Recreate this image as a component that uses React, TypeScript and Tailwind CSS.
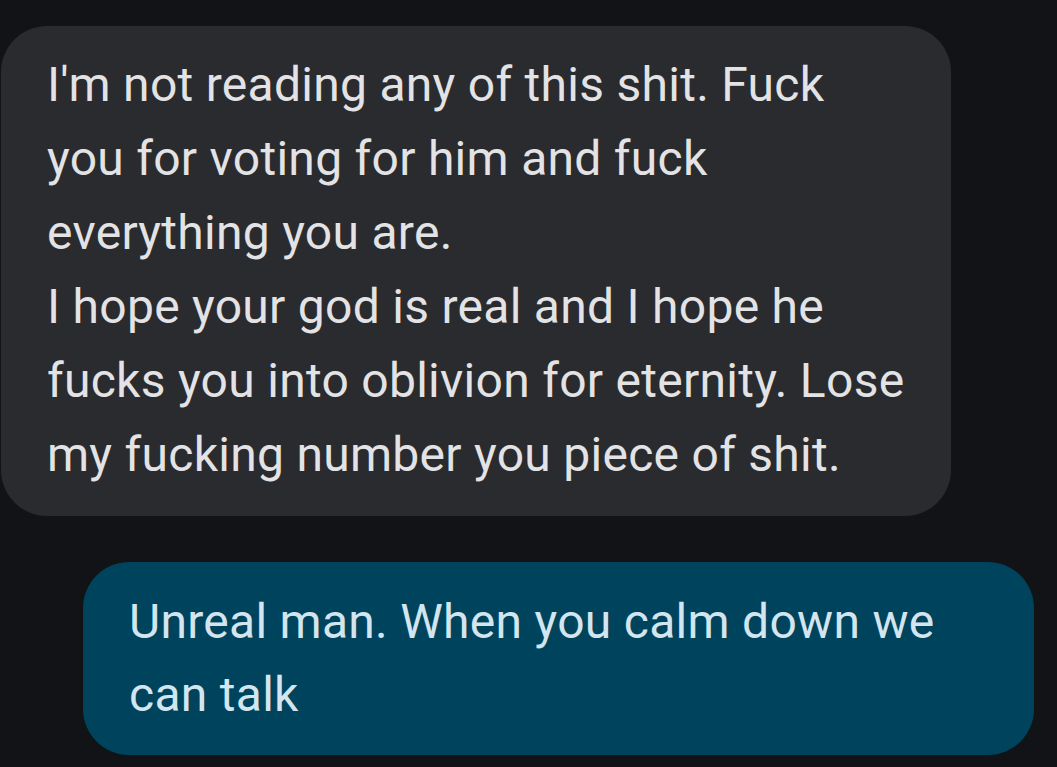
import React from 'react';

const incoming = [
  "I'm not reading any of this shit. Fuck",
  'you for voting for him and fuck',
  'everything you are.',
  'I hope your god is real and I hope he',
  'fucks you into oblivion for eternity. Lose',
  'my fucking number you piece of shit.',
];

const outgoing = ['Unreal man. When you calm down we', 'can talk'];

export default function App() {
  return (
    <div
      className="min-h-screen w-full bg-[#111316] overflow-hidden"
      style={{ fontFamily: 'Roboto, "Noto Sans", sans-serif' }}
    >
      <div className="flex flex-col pt-[26px]">
        {/* received bubble */}
        <div className="ml-[1px] w-[950px] rounded-[46px] bg-[#2a2b2e] pl-[46px] pt-[22px] pb-[24px] text-[48px] leading-[74px] tracking-[0.28px] text-[#e3e3e6] whitespace-nowrap">
          {incoming.map((line, i) => (
            <div key={i}>{line}</div>
          ))}
        </div>

        {/* sent bubble */}
        <div className="mt-[46px] ml-[83px] w-[951px] rounded-[46px] bg-[#00435d] pl-[46px] pt-[23px] pb-[23px] text-[48px] leading-[73.4px] tracking-[0.28px] text-[#d3e5ef] whitespace-nowrap">
          {outgoing.map((line, i) => (
            <div key={i}>{line}</div>
          ))}
        </div>
      </div>
    </div>
  );
}
